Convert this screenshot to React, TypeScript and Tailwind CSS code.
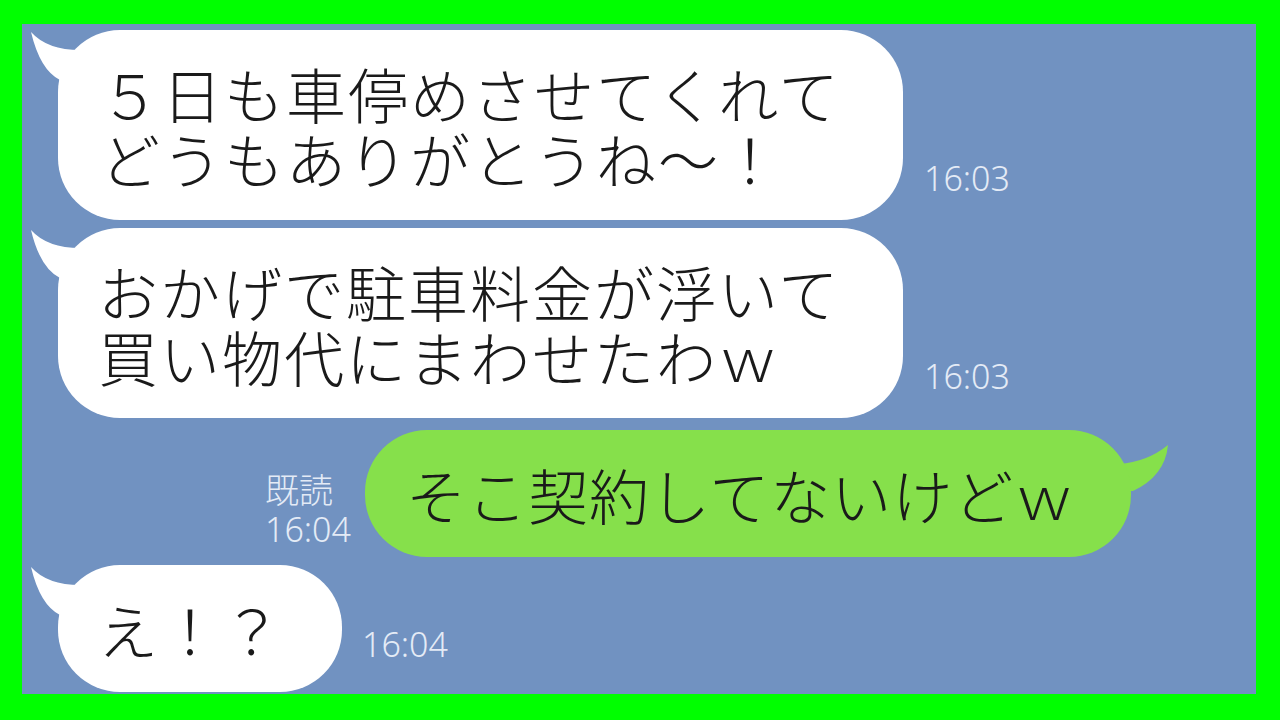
import React from "react";

const jp = { fontFamily: '"Noto Sans CJK JP", "Noto Sans", sans-serif' };
const ts = { fontFamily: '"Noto Sans", "Noto Sans CJK JP", sans-serif' };

function LeftTail() {
  return (
    <svg
      className="absolute left-[-28px] top-0"
      width="90"
      height="100"
      viewBox="0 0 90 100"
    >
      <path d="M1 2 Q18 21 54 20 L54 70 L30 70 L30 50 Q10 40 1 2 Z" fill="#ffffff" />
    </svg>
  );
}

function RightTail() {
  return (
    <svg
      className="absolute right-[-40px] top-0"
      width="90"
      height="80"
      viewBox="0 0 90 80"
    >
      <path d="M38 34 Q66 32 87 15 Q84 46 52 61 L20 61 L20 34 Z" fill="#86e04b" />
    </svg>
  );
}

function Stamp({ children }: { children: React.ReactNode }) {
  return (
    <div className="text-[34px] font-light leading-[40px] text-[#e4ebf6]" style={ts}>
      {children}
    </div>
  );
}

export default function App() {
  return (
    <div className="h-[720px] w-[1280px] bg-[#00ff00] pt-[24px] pl-[22px] pr-[24px] pb-[26px]">
      <div className="flex h-full w-full flex-col bg-[#7192c1] pl-[36px]">
        {/* message 1 */}
        <div className="mt-[6px] flex items-end">
          <div className="relative">
            <LeftTail />
            <div
              className="relative flex h-[190px] w-[845px] flex-col justify-center rounded-[62px] bg-white pl-[42px] text-[60px] font-light leading-[65px] tracking-[2px] text-[#1a1a1a]"
              style={jp}
            >
              <div>５日も車停めさせてくれて</div>
              <div>どうもありがとうね〜！</div>
            </div>
          </div>
          <div className="mb-[22px] ml-[21px]">
            <Stamp>16:03</Stamp>
          </div>
        </div>

        {/* message 2 */}
        <div className="mt-[8px] flex items-end">
          <div className="relative">
            <LeftTail />
            <div
              className="relative flex h-[190px] w-[845px] flex-col justify-center rounded-[62px] bg-white pl-[40px] text-[60px] font-light leading-[65px] tracking-[2px] text-[#1a1a1a]"
              style={jp}
            >
              <div>おかげで駐車料金が浮いて</div>
              <div>買い物代にまわせたわｗ</div>
            </div>
          </div>
          <div className="mb-[22px] ml-[21px]">
            <Stamp>16:03</Stamp>
          </div>
        </div>

        {/* message 3 (mine) */}
        <div className="mt-[12px] flex items-end pl-[207px]">
          <div className="mb-[8px] mr-[14px]">
            <div className="text-[34px] font-light leading-[40px] text-[#e4ebf6]" style={jp}>
              既読
            </div>
            <Stamp>16:04</Stamp>
          </div>
          <div className="relative">
            <RightTail />
            <div
              className="relative flex h-[127px] w-[766px] items-center rounded-[62px] bg-[#86e04b] pl-[41px] text-[60px] font-light leading-[65px] tracking-[1px] text-[#1a1a1a]"
              style={jp}
            >
              そこ契約してないけどｗ
            </div>
          </div>
        </div>

        {/* message 4 */}
        <div className="mt-[8px] flex items-end">
          <div className="relative">
            <LeftTail />
            <div
              className="relative flex h-[127px] w-[284px] items-center rounded-[62px] bg-white pl-[40px] text-[60px] font-light leading-[65px] tracking-[2px] text-[#1a1a1a]"
              style={jp}
            >
              え！？
            </div>
          </div>
          <div className="mb-[28px] ml-[20px]">
            <Stamp>16:04</Stamp>
          </div>
        </div>
      </div>
    </div>
  );
}
